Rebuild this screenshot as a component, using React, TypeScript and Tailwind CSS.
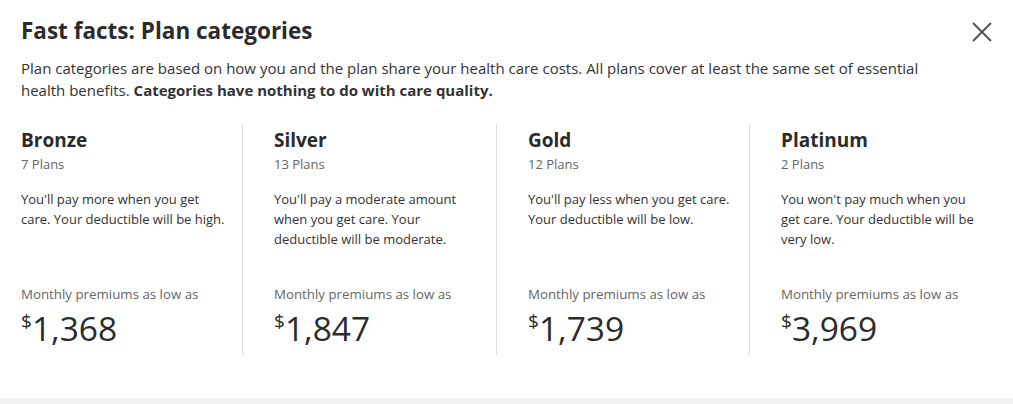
import React from "react";

const plans = [
  {
    name: "Bronze",
    count: "7 Plans",
    text: "You'll pay more when you get care. Your deductible will be high.",
    price: "1,368",
  },
  {
    name: "Silver",
    count: "13 Plans",
    text: "You'll pay a moderate amount when you get care. Your deductible will be moderate.",
    price: "1,847",
  },
  {
    name: "Gold",
    count: "12 Plans",
    text: "You'll pay less when you get care. Your deductible will be low.",
    price: "1,739",
  },
  {
    name: "Platinum",
    count: "2 Plans",
    text: "You won't pay much when you get care. Your deductible will be very low.",
    price: "3,969",
  },
];

export default function App() {
  return (
    <div
      className="w-[1013px] h-[404px] bg-white text-[#333] flex flex-col"
      style={{ fontFamily: '"Open Sans", sans-serif' }}
    >
      <div className="flex-1 px-[21px] pt-[15px]">
        <div className="flex justify-between items-start">
          <h1 className="text-[22.5px] leading-[32px] font-bold text-[#2b2b2b]">
            Fast facts: Plan categories
          </h1>
          <button className="mt-[5px] mr-[-2px] text-[#555]">
            <svg width="24" height="24" viewBox="0 0 24 24" fill="none" stroke="currentColor" strokeWidth="2">
              <path d="M3 3L21 21M21 3L3 21" />
            </svg>
          </button>
        </div>
        <p className="mt-[10px] text-[15px] leading-[22px] w-[930px]">
          Plan categories are based on how you and the plan share your health care costs. All plans cover at least the same set of essential health benefits.{" "}
          <span className="font-bold">Categories have nothing to do with care quality.</span>
        </p>
        <div className="mt-[23px] grid grid-cols-[222px_254px_253px_1fr]">
          {plans.map((p, i) => (
            <div
              key={p.name}
              className={`h-[231px] flex flex-col ${i > 0 ? "pl-[31px]" : ""} ${i < 3 ? "border-r border-[#ddd]" : ""}`}
            >
              <div className="pr-3">
                <h2 className="text-[19px] leading-[28px] font-bold text-[#2b2b2b] mt-[2px]">{p.name}</h2>
                <div className="text-[13px] leading-[18px] text-[#666] mt-[1px]">{p.count}</div>
                <p className="mt-[16px] text-[13px] leading-[20px] text-[#333]">{p.text}</p>
              </div>
              <div className="mt-auto mb-[7px]">
                <div className="text-[13.3px] leading-[20px] text-[#666]">Monthly premiums as low as</div>
                <div className="flex items-start text-[#2b2b2b] mt-[4px]">
                  <span className="text-[19px] leading-[24px] mt-[1px]">$</span>
                  <span className="text-[33.5px] leading-[40px]">{p.price}</span>
                </div>
              </div>
            </div>
          ))}
        </div>
      </div>
      <div className="h-[6px] bg-[#f2f2f2]" />
    </div>
  );
}
